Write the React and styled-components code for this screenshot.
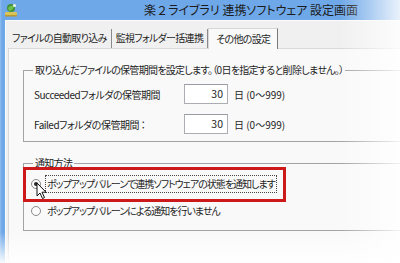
import React from "react";
import styled, { createGlobalStyle } from "styled-components";

const Global = createGlobalStyle`
  html, body { margin: 0; padding: 0; background: #fff; }
  body { font-family: "Noto Sans CJK JP", "Noto Sans", sans-serif; }
`;

const Window = styled.div`
  position: relative;
  width: 400px;
  height: 263px;
  overflow: hidden;
  display: flex;
  flex-direction: column;
  background: linear-gradient(to right, #8ebcee 0px, #6fa8e8 2px);
  font-family: "Noto Sans CJK JP", "Noto Sans", sans-serif;
  font-feature-settings: "palt";
  color: #1e1e1e;
`;

const TitleBar = styled.div`
  height: 20px;
  flex: none;
  display: flex;
  align-items: center;
  padding-left: 4px;
`;

const Title = styled.div`
  margin-left: 126px;
  font-size: 12px;
  line-height: 20px;
  color: #1b1b1b;
  white-space: nowrap;
`;

const WideDigit = styled.span`
  font-feature-settings: normal;
`;

const Client = styled.div`
  flex: 1;
  width: 440px;
  margin-left: 5px;
  background: #f0f0f0;
  border-left: 1px solid #fbfbfb;
  border-top: 1px solid #fbfbfb;
  padding: 6px 0 0 2px;
  display: flex;
  flex-direction: column;
`;

const TabStrip = styled.div`
  display: flex;
  height: 21px;
  align-items: flex-end;
`;

const Tab = styled.div`
  height: ${(p) => (p.$active ? "21px" : "19px")};
  box-sizing: border-box;
  padding: 0 ${(p) => (p.$active ? "7px" : "4px")};
  font-size: 10px;
  letter-spacing: -0.7px;
  line-height: ${(p) => (p.$active ? "20px" : "18px")};
  white-space: nowrap;
  background: ${(p) => (p.$active ? "#f9f9f9" : "#f0f0f0")};
  border-right: 1px solid ${(p) => (p.$active ? "#7a7a7a" : "#8a8a8a")};
  border-left: ${(p) => (p.$active ? "1px solid #d6d6d6" : "none")};
  border-top: ${(p) => (p.$active ? "1px solid #d6d6d6" : "none")};
  margin-bottom: ${(p) => (p.$active ? "-1px" : "0")};
  position: relative;
`;

const Panel = styled.div`
  flex: 1;
  background: #f9f9f9;
  border: 1px solid #d9d9d9;
  padding: 14px 0 0 14px;
  display: flex;
  flex-direction: column;
`;

const Group = styled.fieldset`
  margin: ${(p) => p.$mt || 0}px 0 0 0;
  width: 400px;
  border: 1px solid #a3a3a3;
  padding: ${(p) => p.$pt}px 0 ${(p) => p.$pb}px 10px;
  display: flex;
  flex-direction: column;
  gap: ${(p) => p.$gap}px;
`;

const Legend = styled.legend`
  padding: 0 2px;
  margin-left: -1px;
  font-size: 10px;
  letter-spacing: -0.7px;
  line-height: 14px;
  white-space: nowrap;
`;

const FieldRow = styled.div`
  display: grid;
  grid-template-columns: 144px 44px auto;
  column-gap: 6px;
  align-items: center;
  height: 20px;
`;

const Label = styled.span`
  font-size: 10px;
  letter-spacing: ${(p) => p.$ls ?? -0.5}px;
  white-space: nowrap;
`;

const NumBox = styled.div`
  box-sizing: border-box;
  height: 20px;
  background: #fff;
  border: 1px solid #abadb3;
  border-top-color: #9a9ca3;
  font-size: 10.5px;
  line-height: 18px;
  text-align: right;
  padding-right: 4px;
`;

const RadioRow = styled.div`
  position: relative;
  display: flex;
  align-items: center;
  height: 18px;
  gap: 4px;
  margin-left: -3px;
`;

const RadioCircle = styled.span`
  flex: none;
  width: 8px;
  height: 8px;
  border-radius: 50%;
  border: 1px solid #8a8a8a;
  background: #fbfbfb;
  display: flex;
  align-items: center;
  justify-content: center;
  &::after {
    content: "";
    display: ${(p) => (p.$checked ? "block" : "none")};
    width: 4px;
    height: 4px;
    border-radius: 50%;
    background: #2a2a2a;
  }
`;

const RadioText = styled.span`
  font-size: 10px;
  letter-spacing: -1px;
  line-height: 16px;
  white-space: nowrap;
  padding: 0 1px;
  border: 1px dotted ${(p) => (p.$focus ? "#444" : "transparent")};
`;

const Highlight = styled.div`
  position: absolute;
  left: -8px;
  top: -8px;
  width: 263px;
  height: 35px;
  box-sizing: border-box;
  border: 3px solid #cc1a1a;
  pointer-events: none;
`;

const Cursor = styled.svg`
  position: absolute;
  left: 5px;
  top: 7px;
`;

const Fade = styled.div`
  position: absolute;
  inset: 0;
  pointer-events: none;
  background:
    linear-gradient(to bottom, rgba(255,255,255,0) 232px, rgba(255,255,255,0.95) 263px),
    linear-gradient(to right, rgba(255,255,255,0) 340px, rgba(255,255,255,0.85) 400px);
`;

function AppIcon() {
  return (
    <svg width="14" height="14" viewBox="0 0 14 14">
      <rect x="1" y="9" width="12" height="4" rx="1" fill="#d9c35a" />
      <rect x="1" y="12" width="12" height="1.5" fill="#b89a2e" />
      <circle cx="7" cy="5" r="4" fill="#3f8f3a" />
      <path d="M4 5 Q7 1 10 4 Q8 8 5 8 Z" fill="#6cbf4a" />
      <circle cx="10.5" cy="2.5" r="1.6" fill="#e8f4e0" />
    </svg>
  );
}

export default function App() {
  return (
    <>
      <Global />
      <Window>
        <TitleBar>
          <AppIcon />
          <Title>楽<WideDigit>２</WideDigit>ライブラリ 連携ソフトウェア 設定画面</Title>
        </TitleBar>
        <Client>
          <TabStrip>
            <Tab>ファイルの自動取り込み</Tab>
            <Tab>監視フォルダー括連携</Tab>
            <Tab $active>その他の設定</Tab>
          </TabStrip>
          <Panel>
            <Group $pt={7} $pb={7} $gap={10}>
              <Legend>取り込んだファイルの保管期間を設定します。（0日を指定すると削除しません。）</Legend>
              <FieldRow>
                <Label>Succeededフォルダの保管期間</Label>
                <NumBox>30</NumBox>
                <Label $ls={0}>日 (0～999)</Label>
              </FieldRow>
              <FieldRow>
                <Label>Failedフォルダの保管期間 ：</Label>
                <NumBox>30</NumBox>
                <Label $ls={0}>日 (0～999)</Label>
              </FieldRow>
            </Group>
            <Group $mt={14} $pt={5} $pb={10} $gap={9}>
              <Legend>通知方法</Legend>
              <RadioRow>
                <RadioCircle $checked />
                <RadioText $focus>ポップアップバルーンで連携ソフトウェアの状態を通知します</RadioText>
                <Highlight />
                <Cursor width="12" height="18" viewBox="0 0 12 18">
                  <path d="M1 1 L1 14 L4 11 L6.5 16.5 L8.5 15.6 L6 10.2 L10 10.2 Z" fill="#fff" stroke="#111" strokeWidth="1" strokeLinejoin="round" />
                </Cursor>
              </RadioRow>
              <RadioRow>
                <RadioCircle />
                <RadioText>ポップアップバルーンによる通知を行いません</RadioText>
              </RadioRow>
            </Group>
          </Panel>
        </Client>
        <Fade />
      </Window>
    </>
  );
}
